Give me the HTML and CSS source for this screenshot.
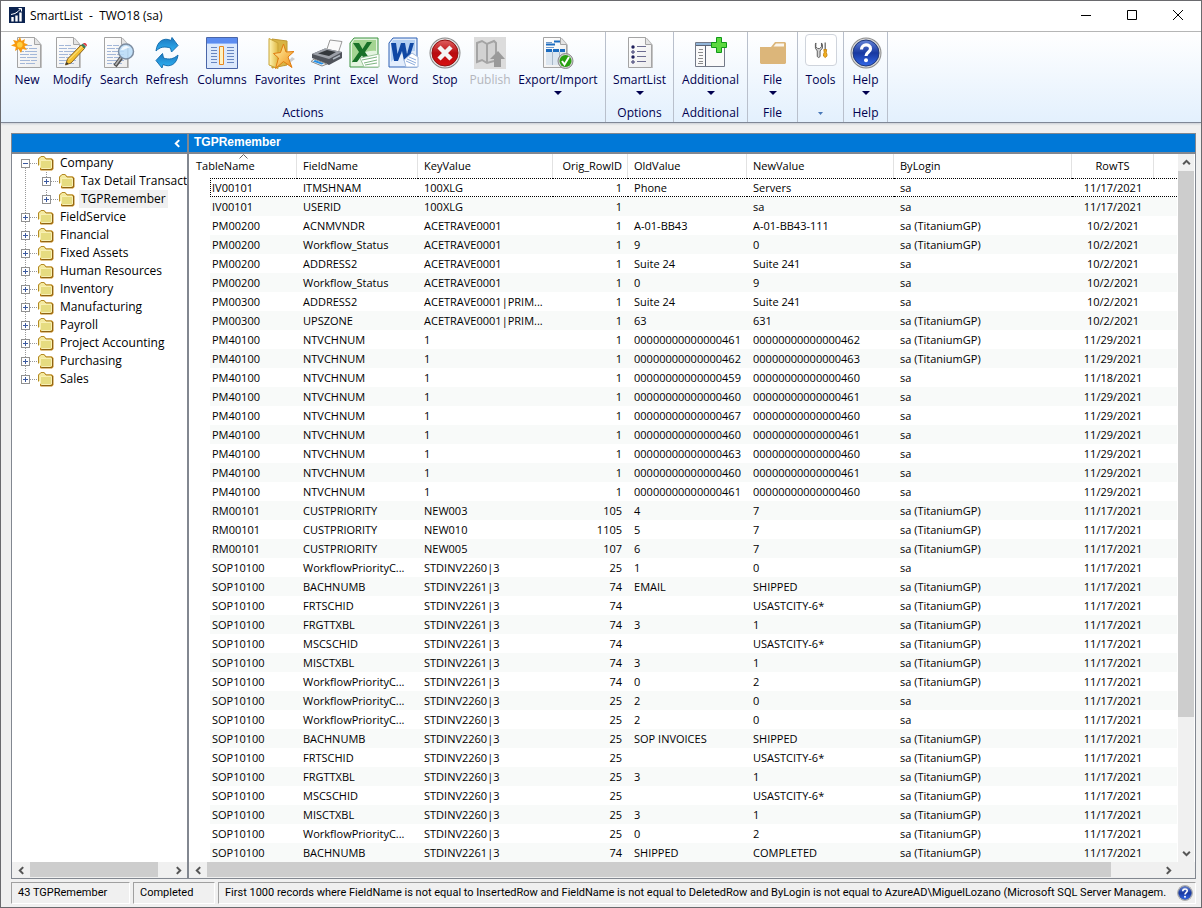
FILE: index.html
```html
<!DOCTYPE html>
<html lang="en">
<head>
  <meta charset="UTF-8">
  <meta name="viewport" content="width=device-width, initial-scale=1.0">
  <title>SmartList - TWO18 (sa)</title>
  <link rel="stylesheet" href="styles.css">
</head>
<body>
  <!-- shared shapes -->
  <svg class="defs" aria-hidden="true">
    <defs>
      <linearGradient id="g-gold" x1="0" y1="0" x2="1" y2="1"><stop offset="0" stop-color="#fffbb0"/><stop offset="1" stop-color="#f08a10"/></linearGradient>
      <linearGradient id="g-folder" x1="0" y1="0" x2="1" y2="0"><stop offset="0" stop-color="#fff6b8"/><stop offset="1" stop-color="#e0b840"/></linearGradient>
      <linearGradient id="g-cyan" x1="0" y1="0" x2="0" y2="1"><stop offset="0" stop-color="#1c78c0"/><stop offset="1" stop-color="#30b4f4"/></linearGradient>
      <linearGradient id="g-red" x1="0" y1="0" x2="0" y2="1"><stop offset="0" stop-color="#e06060"/><stop offset="0.5" stop-color="#b80c10"/><stop offset="1" stop-color="#d81010"/></linearGradient>
      <linearGradient id="g-blue" x1="0" y1="0" x2="0" y2="1"><stop offset="0" stop-color="#6484d8"/><stop offset="0.5" stop-color="#1838a0"/><stop offset="1" stop-color="#3468e8"/></linearGradient>
      <linearGradient id="g-paper" x1="0" y1="0" x2="1" y2="1"><stop offset="0" stop-color="#ffffff"/><stop offset="1" stop-color="#ececec"/></linearGradient>
      <symbol id="page" viewBox="0 0 32 32">
        <path d="M3 1h18l6 7v23H3z" fill="#c4c4c4"/>
        <path d="M2.500.5h17l6 7v23h-23z" fill="url(#g-paper)" stroke="#a4a4a4"/>
        <path d="M19.500.5v7h6" fill="#e4e4e4" stroke="#a4a4a4"/>
      </symbol>
      <symbol id="lines" viewBox="0 0 32 32">
        <path d="M5 8.500h5m1 0h6M5 11.500h8m1 0h8M5 14.500h4m1 0h12M5 17.500h9m1 0h7M5 20.500h6m1 0h10M5 23.500h10m1 0h6M5 26.500h5m1 0h9" stroke="#a3b7d8" fill="none"/>
      </symbol>
      <symbol id="folder" viewBox="0 0 16 16">
        <path d="M2 15V8L.5 6V3.500L3 1.500h3.500L8 3.500h6L15.500 5v9L14 15.500H3z" fill="#c08418"/>
        <path d="M.5 10.500V4L3 1.500h3L8 4h5.500v2" fill="#f4eaa0" stroke="#b48a24"/>
        <path d="M2.500 5.500h11V13l-1 .5h-9l-1-1z" fill="#e6dc80" stroke="#f8f0b4"/>
        <path d="M14.500 5v8.500l-1 1h-10" fill="none" stroke="#8e6414"/>
      </symbol>
      <symbol id="help" viewBox="0 0 32 32">
        <circle cx="16" cy="16" r="15.500" fill="#8c8c8c"/>
        <circle cx="16" cy="16" r="14.500" fill="#d8d8d8"/>
        <circle cx="16" cy="16" r="13" fill="url(#g-blue)" stroke="#203878"/>
        <path d="M11.500 12.500c0-6 9-6 9-.8 0 3.600-4.500 3.600-4.500 7.300" fill="none" stroke="#fff" stroke-width="3.200"/>
        <circle cx="16" cy="23.300" r="2" fill="#fff"/>
      </symbol>
      <symbol id="left" viewBox="0 0 8 8"><path d="M5.500 1L2.500 4l3 3" fill="none" stroke="currentColor" stroke-width="1.800"/></symbol>
      <symbol id="right" viewBox="0 0 8 8"><path d="M2.500 1l3 3-3 3" fill="none" stroke="currentColor" stroke-width="1.800"/></symbol>
      <symbol id="up" viewBox="0 0 8 8"><path d="M1 5.500l3-3 3 3" fill="none" stroke="currentColor" stroke-width="1.800"/></symbol>
      <symbol id="down" viewBox="0 0 8 8"><path d="M1 2.500l3 3 3-3" fill="none" stroke="currentColor" stroke-width="1.800"/></symbol>
    </defs>
  </svg>

  <div class="window">
    <header class="titlebar">
      <svg class="app-icon" viewBox="0 0 16 16"><path d="M0 0h16v16H0z" fill="#0b2350"/><path d="M3.500 10v4.500M7.500 8.500v6M11.500 5.500v9" stroke="#fff" stroke-width="2.400"/><path d="M2 7.500l4-1 3-2 3-3M9.500 1.500h3v3" fill="none" stroke="#fff"/></svg>
      <h1>SmartList  -  TWO18 (sa)</h1>
      <div class="window-buttons">
        <button aria-label="Minimize"><svg viewBox="0 0 12 12"><path d="M1 6.500h10" stroke="#000"/></svg></button>
        <button aria-label="Maximize"><svg viewBox="0 0 12 12"><path d="M1.500 1.500h9v9h-9z" fill="none" stroke="#000"/></svg></button>
        <button aria-label="Close"><svg viewBox="0 0 12 12"><path d="M1 1l10 10M11 1L1 11" stroke="#000"/></svg></button>
      </div>
    </header>

    <nav class="ribbon">
      <section class="group actions">
        <div class="buttons">
          <button class="tool">
            <svg viewBox="0 0 32 32"><use href="#page" x="4"/><use href="#lines" x="4"/><path d="M9 0l1.500 4L14 2l-1 4 4 1.500-3.500 2L16 13l-4.500-1L10 16l-2.500-4L4 14l.8-4L0 8.500 4 6.500 2 3l4.500 1z" fill="#f79a10"/><circle cx="8.800" cy="7.800" r="2.800" fill="#ffd040"/></svg>
            <span>New</span>
          </button>
          <button class="tool">
            <svg viewBox="0 0 32 32"><use href="#page" x="-2"/><use href="#lines" x="-2"/><path d="M9.500 28l2-6L25 8l3.500 3.500L15 26z" fill="#f4c030" stroke="#8a6424"/><path d="M13 22.500L26.500 9" stroke="#fff0a0"/><path d="M25 8l2-1.500 3 3.200-1.500 1.800z" fill="#3c7c5c"/><path d="M27 6.500c2-1.500 5 1 3.500 3z" fill="#d83440"/><path d="M9.500 28l1.200-3 2 1.800z" fill="#333"/></svg>
            <span>Modify</span>
          </button>
          <button class="tool">
            <svg viewBox="0 0 32 32"><use href="#page" x="-1"/><use href="#lines" x="-1"/><path d="M18.500 20.500L12 29" stroke="#505050" stroke-width="4"/><path d="M18 20.500L12.500 28" stroke="#b4b4b4" stroke-width="1.500"/><circle cx="23" cy="14.500" r="7.500" fill="#b8dcf8" fill-opacity=".85" stroke="#7c8ca0" stroke-width="1.500"/><path d="M18 13c1-4 6-5.500 9-2.500-3 0-6 3-9 2.500z" fill="#fff" fill-opacity=".8"/></svg>
            <span>Search</span>
          </button>
          <button class="tool">
            <svg viewBox="0 0 32 32"><path d="M5 14C6 4 13 0 20 3.500L21 .5l6 8-6.500 6.500-1-4C13 9 9 10 5 14z" fill="url(#g-cyan)" stroke="#1870b0"/><path d="M27 18c-1 9-8 13-15 9.500L11 31l-6-7.500 6.500-7 1 4.500c6 2 10 1 14.500-3z" fill="url(#g-cyan)" stroke="#1870b0"/></svg>
            <span>Refresh</span>
          </button>
          <button class="tool">
            <svg viewBox="0 0 32 32"><path d="M.5.5h31v31H.5z" fill="#dce9fc" stroke="#4a66a8"/><path d="M1 1h30v5H1z" fill="#5c8cf0"/><path d="M1 6h30v1H1z" fill="#8fb4f8"/><path d="M5 10.500h6m-6 3h6m-6 3h6m-6 3h6m-6 3h6m-6 3h6M21 10.500h7m-7 3h7m-7 3h7m-7 3h7m-7 3h7m-7 3h7" stroke="#6886c0"/><path d="M13.500 9.500h4v18h-4z" fill="#fff2c0" stroke="#e88820"/></svg>
            <span>Columns</span>
          </button>
          <button class="tool">
            <svg viewBox="0 0 32 32"><path d="M20 30l11-8-3-2z" fill="#ccc"/><path d="M8 2l15 2v24l-15 3z" fill="#d8b444" stroke="#c09830"/><path d="M5 1.500L14 6v25.500L5 28z" fill="url(#g-folder)" stroke="#c8a438"/><path d="M19.500 7l2.500 8 8-.5-6 5.500 4 10.500-8.500-6-8 7 3-10.500-5-4.500 7-1z" fill="url(#g-gold)" stroke="#e07c10"/></svg>
            <span>Favorites</span>
          </button>
          <button class="tool">
            <svg viewBox="0 0 32 32"><path d="M15 15l4-12 12 1.500-4 12z" fill="#fafafa" stroke="#999"/><path d="M1 17l13-5.500L31 15v6l-13 7L1 21z" fill="#50545c"/><path d="M1 17l13-5.500L31 15l-13 7z" fill="#9ca0a8"/><path d="M7 16.500l9-3.500 9 2-7 4z" fill="#34383c"/><path d="M3 22l13 5-5 2-11-4.500z" fill="#f4f4f4" stroke="#888"/><path d="M4 23l9 3.500-2.500 1L2 24.500z" fill="#2490e8"/><path d="M22 22l7-3.500" stroke="#b0b8c0" stroke-width="1.500"/></svg>
            <span>Print</span>
          </button>
          <button class="tool">
            <svg viewBox="0 0 32 32"><path d="M6 1h24v29H2V6z" fill="#e4f4e0" stroke="#3c9440"/><path d="M6 3h22v11C18 13 10 18 4 26V7z" fill="#a4d492"/><path d="M5 6h6l3.500 6L19 5h5l-7 10 7 10h-6l-4-6.500L9 25H4l7-10z" fill="#187028"/><path d="M12 21l19-4v13H16z" fill="#fff" stroke="#9cc49c"/><path d="M14 23l15-3M16 26l13-3M17 28l12-2" stroke="#7cb480"/></svg>
            <span>Excel</span>
          </button>
          <button class="tool">
            <svg viewBox="0 0 32 32"><path d="M6 1h24v29H2V6z" fill="#e4eefc" stroke="#2c60b4"/><path d="M6 3h22v11C18 14 10 18 4 25V7z" fill="#b4d0f2"/><path d="M4 6h5l1.500 11L14 6h4l2 11 3-11h4l-5.500 18H17l-2-10-4 10H7z" fill="#1048a4"/><path d="M17 23l8-7 6 4v10H19z" fill="#fff" stroke="#a0b8dc"/><path d="M22 20l7 3m-9-1l9 4m-10-2l9 4" stroke="#8cacdc"/></svg>
            <span>Word</span>
          </button>
          <button class="tool">
            <svg viewBox="0 0 32 32"><circle cx="16" cy="16" r="15.500" fill="#888"/><circle cx="16" cy="16" r="14.500" fill="#e4e4e4"/><circle cx="16" cy="16" r="13" fill="url(#g-red)" stroke="#901010"/><path d="M10 10l12 12M22 10L10 22" stroke="#f4f4f4" stroke-width="4.500"/></svg>
            <span>Stop</span>
          </button>
          <button class="tool" disabled>
            <svg viewBox="0 0 32 32"><path d="M0 0h32v32H0z" fill="#dcdcdc"/><path d="M3 6l5-2 5 3 7-3 2 2v19l-2-1-7 2-5-3-5 2z" fill="#d2d2d2" stroke="#a4a4a4" stroke-width="2"/><path d="M13 7v18" stroke="#a4a4a4" stroke-width="2"/><path d="M24 14l7 8h-4v8h-7v-8h-4z" fill="#9a9a9a"/></svg>
            <span>Publish</span>
          </button>
          <button class="tool more">
            <svg viewBox="0 0 32 32"><use href="#page" x="-1"/><path d="M12 4.500h6M4 7.500h9" stroke="#1c6cc0" stroke-width="2"/><path d="M4 5.500h6m-6 5h8" stroke="#7098c8"/><path d="M4 13h19v15H4z" fill="#dce6f0"/><path d="M4 13.500h6m1 0h6m1 0h5" stroke="#1c6cc0" stroke-width="3"/><path d="M10.500 15v13m7-13v13" stroke="#a8b8c8"/><circle cx="23.500" cy="24" r="7.500" fill="#d0d0d0" stroke="#888"/><circle cx="23.500" cy="24" r="6" fill="#28a010"/><path d="M20 24l2.500 3.500L27 20" fill="none" stroke="#fff" stroke-width="2"/></svg>
            <span>Export/Import</span>
          </button>
        </div>
        <h2>Actions</h2>
      </section>
      <section class="group options">
        <div class="buttons">
          <button class="tool more">
            <svg viewBox="0 0 32 32"><use href="#page" x="2"/><g fill="#20205c"><circle cx="9" cy="10" r="1.700"/><circle cx="9" cy="20" r="1.700"/></g><g fill="#fff" stroke="#20205c"><circle cx="9" cy="15" r="1.200"/><circle cx="9" cy="25" r="1.200"/></g><path d="M13 9.500h9m-9 5h9m-9 5h9m-9 5h9" stroke="#6c6c90"/></svg>
            <span>SmartList</span>
          </button>
        </div>
        <h2>Options</h2>
      </section>
      <section class="group additional">
        <div class="buttons">
          <button class="tool more">
            <svg viewBox="0 0 32 32"><path d="M.5 5.500h29v24H.5z" fill="#fafafa" stroke="#747a88"/><path d="M1 6h28v3H1z" fill="#90b4d8"/><path d="M1 8.500h28M10.500 9v20" stroke="#5c6474"/><path d="M4 12.500h4m-5 3h5m-4 3h4m-5 3h5m-4 3h4m-5 2h5" stroke="#8c8c8c"/><path d="M21.500.5h5v5h5v5h-5v5h-5v-5h-5v-5h5z" fill="#5cd840" stroke="#109818"/></svg>
            <span>Additional</span>
          </button>
        </div>
        <h2>Additional</h2>
      </section>
      <section class="group file">
        <div class="buttons">
          <button class="tool more">
            <svg viewBox="0 0 32 32"><path d="M3 10h11l4-5h10l1 1v20l-1 1H4l-1-1z" fill="#dcb67a"/><path d="M16.500 9.500l2.500-3h8v3z" fill="#fbf6ec"/></svg>
            <span>File</span>
          </button>
        </div>
        <h2>File</h2>
      </section>
      <section class="group tools">
        <div class="buttons">
          <button class="tool framed">
            <svg viewBox="0 0 32 32"><path d="M10.500 8.500v4l2 2h2l2-2v-4l1 1.500v4l-2.500 3v6l-1.500 1-1.500-1v-6L10 14v-4z" fill="#d4d4d4" stroke="#555"/><path d="M20.500 8v8" stroke="#777" stroke-width="1.500"/><path d="M19 15.500h3l-.5 3 .8 2v2l-1.800 1.500-1.800-1.500v-2l.8-2z" fill="#f4b020" stroke="#c48410"/></svg>
            <span>Tools</span>
          </button>
        </div>
        <h2><svg class="caret" viewBox="0 0 5 3" role="img" aria-label="More"><path d="M0 0h5L2.500 3z" fill="#4878b8"/></svg></h2>
      </section>
      <section class="group help">
        <div class="buttons">
          <button class="tool more">
            <svg viewBox="0 0 32 32"><use href="#help"/></svg>
            <span>Help</span>
          </button>
        </div>
        <h2>Help</h2>
      </section>
    </nav>

    <main class="content">
      <aside class="sidebar">
        <div class="panel-title"><button aria-label="Collapse"><svg viewBox="0 0 8 8"><use href="#left"/></svg></button></div>
        <ul class="tree">
          <li><button class="expander open" aria-label="Collapse Company"></button><svg><use href="#folder"/></svg><a href="#">Company</a></li>
          <li class="child"><button class="expander" aria-label="Expand Tax Detail Transactions"></button><svg><use href="#folder"/></svg><a href="#">Tax Detail Transactions</a></li>
          <li class="child"><button class="expander" aria-label="Expand TGPRemember"></button><svg><use href="#folder"/></svg><a href="#" class="selected">TGPRemember</a></li>
          <li><button class="expander" aria-label="Expand FieldService"></button><svg><use href="#folder"/></svg><a href="#">FieldService</a></li>
          <li><button class="expander" aria-label="Expand Financial"></button><svg><use href="#folder"/></svg><a href="#">Financial</a></li>
          <li><button class="expander" aria-label="Expand Fixed Assets"></button><svg><use href="#folder"/></svg><a href="#">Fixed Assets</a></li>
          <li><button class="expander" aria-label="Expand Human Resources"></button><svg><use href="#folder"/></svg><a href="#">Human Resources</a></li>
          <li><button class="expander" aria-label="Expand Inventory"></button><svg><use href="#folder"/></svg><a href="#">Inventory</a></li>
          <li><button class="expander" aria-label="Expand Manufacturing"></button><svg><use href="#folder"/></svg><a href="#">Manufacturing</a></li>
          <li><button class="expander" aria-label="Expand Payroll"></button><svg><use href="#folder"/></svg><a href="#">Payroll</a></li>
          <li><button class="expander" aria-label="Expand Project Accounting"></button><svg><use href="#folder"/></svg><a href="#">Project Accounting</a></li>
          <li><button class="expander" aria-label="Expand Purchasing"></button><svg><use href="#folder"/></svg><a href="#">Purchasing</a></li>
          <li><button class="expander" aria-label="Expand Sales"></button><svg><use href="#folder"/></svg><a href="#">Sales</a></li>
        </ul>
        <div class="scrollbar">
          <button aria-label="Scroll left"><svg viewBox="0 0 8 8"><use href="#left"/></svg></button>
          <div class="track"><div class="thumb"></div></div>
          <button aria-label="Scroll right"><svg viewBox="0 0 8 8"><use href="#right"/></svg></button>
        </div>
      </aside>

      <section class="list">
        <h2 class="panel-title">TGPRemember</h2>
        <div class="list-body">
          <div class="table-wrap">
            <table>
              <colgroup>
                <col class="c-gutter"><col class="c-table"><col class="c-field"><col class="c-key"><col class="c-row">
                <col class="c-old"><col class="c-new"><col class="c-login"><col class="c-ts"><col>
              </colgroup>
              <thead>
                <tr>
                  <th colspan="2" class="sorted"><svg viewBox="0 0 9 5"><path d="M.5 4.500l4-4 4 4" fill="none" stroke="#666"/></svg>TableName</th>
                  <th>FieldName</th>
                  <th>KeyValue</th>
                  <th class="num">Orig_RowID</th>
                  <th>OldValue</th>
                  <th>NewValue</th>
                  <th>ByLogin</th>
                  <th class="date">RowTS</th>
                  <td></td>
                </tr>
              </thead>
              <tbody id="records"></tbody>
            </table>
          </div>
          <div class="scrollbar vertical">
            <button aria-label="Scroll up"><svg viewBox="0 0 8 8"><use href="#up"/></svg></button>
            <div class="track"><div class="thumb"></div></div>
            <button aria-label="Scroll down"><svg viewBox="0 0 8 8"><use href="#down"/></svg></button>
          </div>
        </div>
        <div class="scrollbar">
          <button aria-label="Scroll left"><svg viewBox="0 0 8 8"><use href="#left"/></svg></button>
          <div class="track"><div class="thumb"></div></div>
          <button aria-label="Scroll right"><svg viewBox="0 0 8 8"><use href="#right"/></svg></button>
        </div>
      </section>
    </main>

    <footer class="statusbar">
      <div class="cell count">43 TGPRemember</div>
      <div class="cell state">Completed</div>
      <div class="cell query">
        <span>First 1000 records where FieldName is not equal to InsertedRow and FieldName is not equal to DeletedRow and ByLogin is not equal to AzureAD\MiguelLozano (Microsoft SQL Server Managem.</span>
        <button aria-label="Help"><svg viewBox="0 0 32 32"><use href="#help"/></svg></button>
      </div>
    </footer>
  </div>

  <script>
    const gp = 'sa (TitaniumGP)';
    // table, field, key, row id, old value, new value, login, date
    const records = [
      ['IV00101', 'ITMSHNAM', '100XLG', 1, 'Phone', 'Servers', 'sa', '11/17/2021'],
      ['IV00101', 'USERID', '100XLG', 1, '', 'sa', 'sa', '11/17/2021'],
      ['PM00200', 'ACNMVNDR', 'ACETRAVE0001', 1, 'A-01-BB43', 'A-01-BB43-111', gp, '10/2/2021'],
      ['PM00200', 'Workflow_Status', 'ACETRAVE0001', 1, '9', '0', gp, '10/2/2021'],
      ['PM00200', 'ADDRESS2', 'ACETRAVE0001', 1, 'Suite 24', 'Suite 241', 'sa', '10/2/2021'],
      ['PM00200', 'Workflow_Status', 'ACETRAVE0001', 1, '0', '9', 'sa', '10/2/2021'],
      ['PM00300', 'ADDRESS2', 'ACETRAVE0001|PRIM...', 1, 'Suite 24', 'Suite 241', 'sa', '10/2/2021'],
      ['PM00300', 'UPSZONE', 'ACETRAVE0001|PRIM...', 1, '63', '631', gp, '10/2/2021'],
      ['PM40100', 'NTVCHNUM', '1', 1, '00000000000000461', '00000000000000462', gp, '11/29/2021'],
      ['PM40100', 'NTVCHNUM', '1', 1, '00000000000000462', '00000000000000463', gp, '11/29/2021'],
      ['PM40100', 'NTVCHNUM', '1', 1, '00000000000000459', '00000000000000460', 'sa', '11/18/2021'],
      ['PM40100', 'NTVCHNUM', '1', 1, '00000000000000460', '00000000000000461', 'sa', '11/29/2021'],
      ['PM40100', 'NTVCHNUM', '1', 1, '00000000000000467', '00000000000000460', 'sa', '11/29/2021'],
      ['PM40100', 'NTVCHNUM', '1', 1, '00000000000000460', '00000000000000461', 'sa', '11/29/2021'],
      ['PM40100', 'NTVCHNUM', '1', 1, '00000000000000463', '00000000000000460', 'sa', '11/29/2021'],
      ['PM40100', 'NTVCHNUM', '1', 1, '00000000000000460', '00000000000000461', 'sa', '11/29/2021'],
      ['PM40100', 'NTVCHNUM', '1', 1, '00000000000000461', '00000000000000460', 'sa', '11/29/2021'],
      ['RM00101', 'CUSTPRIORITY', 'NEW003', 105, '4', '7', gp, '11/17/2021'],
      ['RM00101', 'CUSTPRIORITY', 'NEW010', 1105, '5', '7', gp, '11/17/2021'],
      ['RM00101', 'CUSTPRIORITY', 'NEW005', 107, '6', '7', gp, '11/17/2021'],
      ['SOP10100', 'WorkflowPriorityC...', 'STDINV2260|3', 25, '1', '0', 'sa', '11/17/2021'],
      ['SOP10100', 'BACHNUMB', 'STDINV2261|3', 74, 'EMAIL', 'SHIPPED', gp, '11/17/2021'],
      ['SOP10100', 'FRTSCHID', 'STDINV2261|3', 74, '', 'USASTCITY-6*', gp, '11/17/2021'],
      ['SOP10100', 'FRGTTXBL', 'STDINV2261|3', 74, '3', '1', gp, '11/17/2021'],
      ['SOP10100', 'MSCSCHID', 'STDINV2261|3', 74, '', 'USASTCITY-6*', gp, '11/17/2021'],
      ['SOP10100', 'MISCTXBL', 'STDINV2261|3', 74, '3', '1', gp, '11/17/2021'],
      ['SOP10100', 'WorkflowPriorityC...', 'STDINV2261|3', 74, '0', '2', gp, '11/17/2021'],
      ['SOP10100', 'WorkflowPriorityC...', 'STDINV2260|3', 25, '2', '0', 'sa', '11/17/2021'],
      ['SOP10100', 'WorkflowPriorityC...', 'STDINV2260|3', 25, '2', '0', 'sa', '11/17/2021'],
      ['SOP10100', 'BACHNUMB', 'STDINV2260|3', 25, 'SOP INVOICES', 'SHIPPED', gp, '11/17/2021'],
      ['SOP10100', 'FRTSCHID', 'STDINV2260|3', 25, '', 'USASTCITY-6*', gp, '11/17/2021'],
      ['SOP10100', 'FRGTTXBL', 'STDINV2260|3', 25, '3', '1', gp, '11/17/2021'],
      ['SOP10100', 'MSCSCHID', 'STDINV2260|3', 25, '', 'USASTCITY-6*', gp, '11/17/2021'],
      ['SOP10100', 'MISCTXBL', 'STDINV2260|3', 25, '3', '1', gp, '11/17/2021'],
      ['SOP10100', 'WorkflowPriorityC...', 'STDINV2260|3', 25, '0', '2', gp, '11/17/2021'],
      ['SOP10100', 'BACHNUMB', 'STDINV2261|3', 74, 'SHIPPED', 'COMPLETED', gp, '11/17/2021']
    ];

    const body = document.getElementById('records');
    records.forEach((record, i) => {
      const row = document.createElement('tr');
      if (i === 0) row.classList.add('focused');
      row.innerHTML = '<td class="gutter"></td>' + record.map((value, col) => {
        const cls = col === 3 ? ' class="num"' : col === 7 ? ' class="date"' : '';
        return `<td${cls}>${value}</td>`;
      }).join('') + '<td></td>';
      body.appendChild(row);
    });
  </script>
</body>
</html>
```
FILE: styles.css
```css
* {
  box-sizing: border-box;
}
body {
  margin: 0;
  font-family: "Open Sans", "Noto Sans", sans-serif;
  font-size: 12px;
  color: #000;
  background: #f0f0f0;
}
h1, h2, ul {
  margin: 0;
  padding: 0;
  font-size: 12px;
  font-weight: normal;
}
button {
  padding: 0;
  border: none;
  background: none;
  font: inherit;
  color: inherit;
}
.defs {
  position: absolute;
  width: 0;
  height: 0;
}
.window {
  display: flex;
  flex-direction: column;
  height: 100vh;
  border: 1px solid #6a6a6e;
  overflow: hidden;
}

/* title bar */
.titlebar {
  display: flex;
  align-items: center;
  height: 31px;
  flex: none;
  padding: 0 0 2px 8px;
  background: #fff;
  border-bottom: 1px solid #b4b4b4;
}
.app-icon {
  width: 16px;
  height: 16px;
}
.titlebar h1 {
  margin-left: 5px;
  white-space: pre;
}
.window-buttons {
  display: flex;
  margin-left: auto;
}
.window-buttons button {
  width: 46px;
  height: 28px;
}
.window-buttons svg {
  display: block;
  width: 12px;
  height: 12px;
  margin: auto;
}

/* ribbon */
.ribbon {
  display: flex;
  flex: none;
  height: 91px;
  color: #00004f;
  background: linear-gradient(#fff, #e3f0fd);
  border-bottom: 1px solid #7f8796;
  box-shadow: 0 1px 2px #c8ccd4;
}
.group {
  display: flex;
  flex-direction: column;
  justify-content: space-between;
  border-right: 1px solid #b9c0cc;
}
.group h2 {
  line-height: 18px;
  text-align: center;
}
.buttons {
  display: grid;
  padding-top: 5px;
}
.actions {
  width: 605px;
}
.actions .buttons {
  padding-left: 3px;
  grid-template-columns: 46px 44px 50px 46px 64px 52px 42px 32px 46px 38px 52px 84px;
}
.options {
  width: 68px;
}
.additional {
  width: 74px;
}
.file {
  width: 50px;
}
.tools {
  width: 46px;
}
.help {
  width: 44px;
}
.tool {
  display: flex;
  flex-direction: column;
  align-items: center;
  height: 59px;
  white-space: nowrap;
}
.tool svg {
  width: 32px;
  height: 32px;
  flex: none;
}
.tool span {
  margin-top: 2px;
  line-height: 18px;
}
.tool:disabled {
  color: #b4b6bc;
}
.tool.more::after {
  content: "";
  margin-top: 2px;
  border: 4px solid transparent;
  border-top-color: #00004f;
  border-bottom: none;
}
.tools .buttons {
  padding-top: 2px;
}
.framed svg {
  margin-bottom: 3px;
  border: 1px solid #cfd4dc;
  border-radius: 4px;
  background: #fff;
}
.caret {
  width: 5px;
  height: 3px;
  vertical-align: middle;
}

/* panels */
.content {
  display: flex;
  flex: 1;
  min-height: 0;
  margin: 10px 5px 0 10px;
  border: 1px solid #828790;
  background: #fff;
}
.sidebar {
  display: flex;
  flex-direction: column;
  width: 177px;
  flex: none;
  border-right: 2px solid #828790;
}
.list {
  display: flex;
  flex-direction: column;
  flex: 1;
  min-width: 0;
}
.panel-title {
  flex: none;
  height: 20px;
  padding-left: 5px;
  font: bold 12px/17px "Liberation Sans", Arial, sans-serif;
  color: #fff;
  background: #0078d7;
  border-bottom: 2px solid #828790;
}
.sidebar .panel-title {
  display: flex;
  align-items: center;
  justify-content: flex-end;
  padding-right: 5px;
}
.panel-title svg {
  display: block;
  width: 9px;
  height: 9px;
}

/* tree */
.tree {
  flex: 1;
  padding-left: 9px;
  list-style: none;
  overflow: hidden;
}
.tree li {
  display: flex;
  align-items: center;
  height: 18px;
  white-space: nowrap;
  background: repeating-linear-gradient(#999 0 1px, transparent 1px 2px) 4px 0 / 1px 100% no-repeat;
}
.tree li:first-child {
  background-position: 4px 12px;
}
.tree li:last-child {
  background-size: 1px 9px;
}
.tree .child {
  padding-left: 21px;
  background: repeating-linear-gradient(#999 0 1px, transparent 1px 2px) 4px 0 / 1px 100% no-repeat, repeating-linear-gradient(#999 0 1px, transparent 1px 2px) 25px 0 / 1px 12px no-repeat;
}
.tree svg {
  width: 16px;
  height: 16px;
  margin: 0 4px 0 1px;
  flex: none;
}
.tree li::before {
  content: "";
  order: 1;
  flex: none;
  width: 7px;
  border-top: 1px dotted #999;
}
.tree svg, .tree a {
  order: 2;
}
.tree a {
  padding: 0 2px;
  line-height: 18px;
  color: #000;
  text-decoration: none;
}
.tree .selected {
  background: #f0f0f0;
}
.expander {
  width: 9px;
  height: 9px;
  flex: none;
  border: 1px solid #919191;
  background: linear-gradient(#3c5aa0, #3c5aa0) center / 5px 1px no-repeat, linear-gradient(#3c5aa0, #3c5aa0) center / 1px 5px no-repeat, #fff;
}
.expander.open {
  background: linear-gradient(#3c5aa0, #3c5aa0) center / 5px 1px no-repeat, #fff;
}

/* table */
.list-body {
  display: flex;
  flex: 1;
  min-height: 0;
  padding-right: 1px;
}
.table-wrap {
  flex: 1;
  min-width: 0;
  padding-right: 1px;
  overflow: hidden;
}
table {
  width: 100%;
  table-layout: fixed;
  border-collapse: separate;
  border-spacing: 0;
  font-size: 11px;
}
.c-gutter {
  width: 21px;
}
.c-table {
  width: 87px;
}
.c-field {
  width: 121px;
}
.c-key {
  width: 135px;
}
.c-row {
  width: 75px;
}
.c-old {
  width: 119px;
}
.c-new {
  width: 147px;
}
.c-login {
  width: 178px;
}
.c-ts {
  width: 82px;
}
th {
  height: 24px;
  padding: 0 6px 2px;
  font-weight: normal;
  text-align: left;
  border-right: 1px solid #e2e2e2;
}
.sorted {
  position: relative;
  padding-left: 7px;
}
.sorted svg {
  position: absolute;
  top: 0;
  left: 50px;
  width: 9px;
  height: 5px;
}
tbody td {
  height: 19px;
  padding: 0 6px;
  line-height: 17px;
  white-space: nowrap;
  overflow: hidden;
}
tbody td:nth-child(2) {
  padding-left: 2px;
}
tbody tr:nth-child(even) td:not(.gutter) {
  background: #f8faf9;
}
.focused td:not(.gutter) {
  border-top: 1px dotted #000;
  border-bottom: 1px dotted #000;
}
.focused td:nth-child(2) {
  border-left: 1px dotted #000;
  padding-left: 1px;
}
.num {
  text-align: right;
  padding: 0 5px 2px 0;
}
td.num {
  padding: 0 6px 0 0;
}
.date {
  text-align: center;
}

/* scroll bars */
.scrollbar {
  display: flex;
  flex: none;
  height: 16px;
  color: #555;
  background: #f0f0f0;
}
.scrollbar button {
  display: flex;
  align-items: center;
  justify-content: center;
  width: 18px;
  height: 16px;
}
.scrollbar svg {
  width: 9px;
  height: 9px;
}
.track {
  flex: 1;
}
.thumb {
  width: 92%;
  height: 15px;
  background: #cdcdcd;
}
.list > .scrollbar {
  padding-right: 18px;
}
.list .thumb {
  width: 95%;
}
.vertical {
  flex-direction: column;
  width: 16px;
  height: auto;
}
.vertical button {
  width: 16px;
  height: 17px;
}
.list .vertical .thumb {
  width: 100%;
  height: 81%;
}

/* status bar */
.statusbar {
  display: flex;
  gap: 3px;
  flex: none;
  margin: 3px 5px 3px 10px;
  font: 11px/20px Roboto, "Liberation Sans", Arial, sans-serif;
}
.cell {
  height: 22px;
  padding: 0 6px;
  white-space: nowrap;
  overflow: hidden;
  border: 1px solid #fff;
  border-top-color: #a0a0a0;
  border-left-color: #a0a0a0;
}
.count {
  width: 119px;
}
.state {
  width: 82px;
}
.query {
  display: flex;
  align-items: center;
  justify-content: space-between;
  flex: 1;
  padding-right: 2px;
}
.query button svg {
  display: block;
  width: 16px;
  height: 16px;
}
```
